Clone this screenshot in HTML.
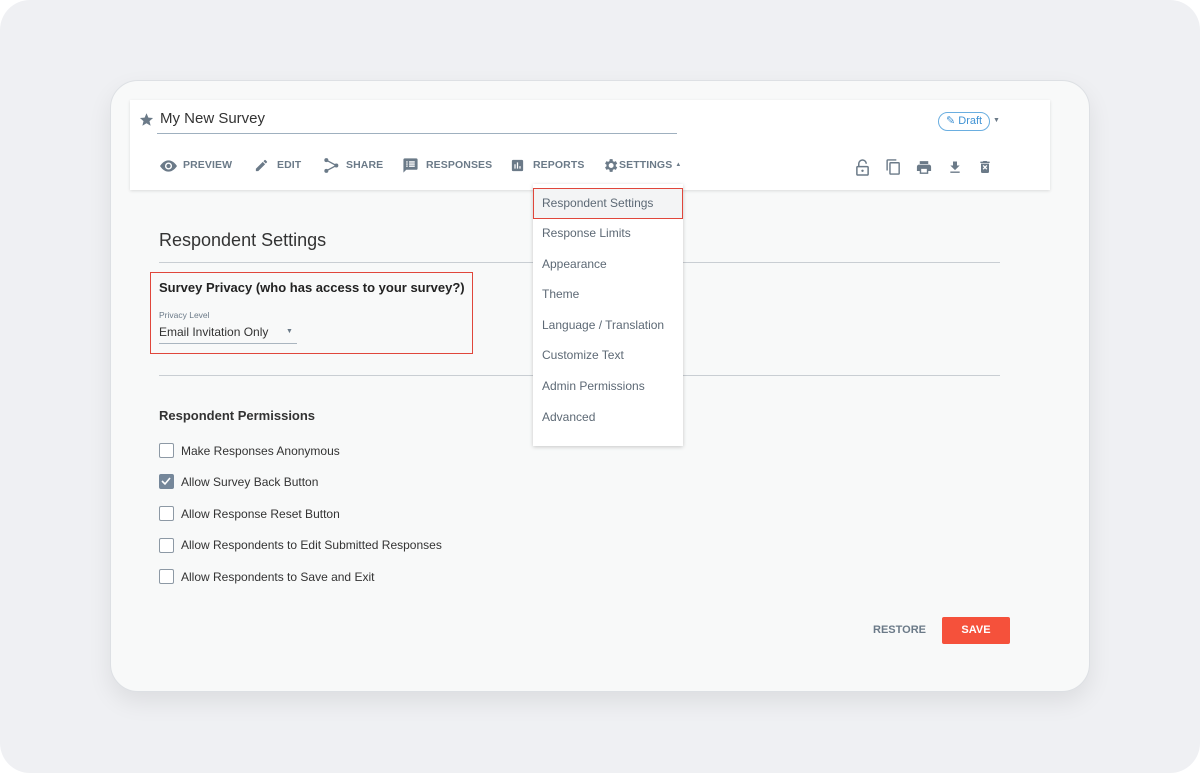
<!DOCTYPE html>
<html><head><meta charset="utf-8"><style>
*{box-sizing:border-box;margin:0;padding:0}
body{width:1200px;height:773px;background:#fff;font-family:"Liberation Sans",sans-serif;overflow:hidden;position:relative}
.frame{position:absolute;left:0;top:0;width:1200px;height:773px;background:#eff0f3;border-radius:30px}
.card{position:absolute;left:110px;top:80px;width:980px;height:612px;background:#f8f9f9;border:1px solid #dde0e4;border-radius:28px;box-shadow:0 10px 24px rgba(0,0,0,.08)}
.abs{position:absolute}
.hdr{position:absolute;left:130px;top:100px;width:920px;height:90px;background:#fff;box-shadow:0 1px 3px rgba(0,0,0,.12)}
.nl{position:absolute;top:159px;font-size:10.5px;font-weight:bold;color:#6b7a88;letter-spacing:.1px}
.ni{position:absolute;fill:#6b7a88}
.menu{position:absolute;left:533px;top:184px;width:150px;height:262px;background:#fff;box-shadow:0 1px 4px rgba(0,0,0,.2)}
.mi{position:absolute;left:9px;font-size:12px;color:#5d6975}
.cb{position:absolute;left:159px;width:15px;height:15px;border:1.5px solid #8d99a5;border-radius:2px;background:#fff}
.cl{position:absolute;left:181px;font-size:12px;color:#333}
.ic{position:absolute;top:158px;fill:#6b7a88}
</style></head><body>
<div class="frame"></div>
<div class="card"></div>
<div class="hdr"></div>
<svg class="abs" style="left:139px;top:112px" width="15" height="15" viewBox="0 0 24 24"><path fill="#6b7a88" d="M12 2l3 7 7.5.6-5.7 5 1.8 7.4L12 18l-6.6 4 1.8-7.4-5.7-5L9 9z"/></svg>
<div class="abs" style="left:160px;top:110px;font-size:15px;color:#333">My New Survey</div>
<div class="abs" style="left:157px;top:133px;width:520px;height:1px;background:#9fb0bf"></div>
<div class="abs" style="left:938px;top:112px;width:52px;height:19px;border:1.5px solid #6aaee0;border-radius:10px;font-size:11px;color:#3f92d4;padding-left:7px;line-height:16px">✎ Draft</div>
<div class="abs" style="left:993px;top:117px;font-size:7px;color:#6b7a88">▼</div>

<svg class="ni" style="left:160px;top:160px" width="17" height="12" viewBox="0 0 24 16"><path d="M12 0C6 0 2 5 0 8c2 3 6 8 12 8s10-5 12-8C22 5 18 0 12 0zm0 13a5 5 0 110-10 5 5 0 010 10zm0-8a3 3 0 100 6 3 3 0 000-6z"/></svg><div class="nl" style="left:183px">PREVIEW</div>
<svg class="ni" style="left:254px;top:158px" width="15" height="15" viewBox="0 0 24 24"><path d="M3 17.25V21h3.75L17.8 9.94l-3.75-3.75zM20.7 7.04a1 1 0 000-1.41l-2.34-2.34a1 1 0 00-1.41 0l-1.83 1.83 3.75 3.75z"/></svg><div class="nl" style="left:277px">EDIT</div>
<svg class="ni" style="left:323px;top:157px" width="16" height="17" viewBox="0 0 24 24"><circle cx="5" cy="4" r="3"/><circle cx="20" cy="12" r="3"/><circle cx="5" cy="20" r="3"/><path d="M5 4l15 8-15 8" stroke="#6b7a88" stroke-width="2" fill="none"/></svg><div class="nl" style="left:346px">SHARE</div>
<svg class="ni" style="left:402px;top:157px" width="17" height="17" viewBox="0 0 24 24"><path d="M20 2H4a2 2 0 00-2 2v18l4-4h14a2 2 0 002-2V4a2 2 0 00-2-2zM8 14H6v-2h2zm0-3H6V9h2zm0-3H6V6h2zm10 6h-8v-2h8zm0-3h-8V9h8zm0-3h-8V6h8z"/></svg><div class="nl" style="left:426px">RESPONSES</div>
<svg class="ni" style="left:510px;top:158px" width="15" height="15" viewBox="0 0 24 24"><path d="M19 3H5a2 2 0 00-2 2v14a2 2 0 002 2h14a2 2 0 002-2V5a2 2 0 00-2-2zM9 17H7v-7h2zm4 0h-2V7h2zm4 0h-2v-4h2z"/></svg><div class="nl" style="left:533px">REPORTS</div>
<svg class="ni" style="left:602px;top:157px" width="17" height="17" viewBox="0 0 24 24"><path d="M19.4 13a7.5 7.5 0 000-2l2.1-1.6-2-3.5-2.5 1a7 7 0 00-1.7-1L14.9 3h-4l-.4 2.9a7 7 0 00-1.7 1l-2.5-1-2 3.5L6.4 11a7.5 7.5 0 000 2l-2.1 1.6 2 3.5 2.5-1a7 7 0 001.7 1l.4 2.9h4l.4-2.9a7 7 0 001.7-1l2.5 1 2-3.5zM12.9 15.5a3.5 3.5 0 110-7 3.5 3.5 0 010 7z"/></svg><div class="nl" style="left:619px">SETTINGS <span style="font-size:6px;vertical-align:2px">▲</span></div>

<svg class="ic" style="left:855px;top:159px" width="15" height="17" viewBox="0 0 16 18"><path d="M4 8V5a4 4 0 018 0" stroke="#6b7a88" stroke-width="1.6" fill="none"/><rect x="2" y="8" width="12" height="9" rx="1" stroke="#6b7a88" stroke-width="1.6" fill="none"/><circle cx="8" cy="12.5" r="1.3"/></svg>
<svg class="ic" style="left:885px;top:158px" width="17" height="18" viewBox="0 0 24 24"><path d="M16 1H4a2 2 0 00-2 2v14h2V3h12zm3 4H8a2 2 0 00-2 2v14a2 2 0 002 2h11a2 2 0 002-2V7a2 2 0 00-2-2zm0 16H8V7h11z"/></svg>
<svg class="ic" style="left:915px;top:159px" width="18" height="17" viewBox="0 0 24 24"><path d="M19 8H5a3 3 0 00-3 3v6h4v4h12v-4h4v-6a3 3 0 00-3-3zm-3 11H8v-5h8zM18 3H6v4h12z"/></svg>
<svg class="ic" style="left:947px;top:159px" width="16" height="17" viewBox="0 0 24 24"><path d="M19 9h-4V3H9v6H5l7 7zM5 18v2h14v-2z"/></svg>
<svg class="ic" style="left:977px;top:158px" width="16" height="18" viewBox="0 0 24 24"><path d="M6 19a2 2 0 002 2h8a2 2 0 002-2V7H6zm2.5-8.6l1.4-1.4L12 11.1 14.1 9l1.4 1.4L13.4 12.5l2.1 2.1-1.4 1.4-2.1-2.1-2.1 2.1-1.4-1.4 2.1-2.1zM15.5 4l-1-1h-5l-1 1H5v2h14V4z"/></svg>

<div class="abs" style="left:159px;top:230px;font-size:18px;color:#333">Respondent Settings</div>
<div class="abs" style="left:159px;top:262px;width:841px;height:1px;background:#c9ced3"></div>
<div class="abs" style="left:150px;top:272px;width:323px;height:82px;border:1.5px solid #e0463b"></div>
<div class="abs" style="left:159px;top:280px;font-size:13px;font-weight:bold;color:#222">Survey Privacy (who has access to your survey?)</div>
<div class="abs" style="left:159px;top:310px;font-size:8.5px;color:#6b7a88">Privacy Level</div>
<div class="abs" style="left:159px;top:325px;font-size:12px;color:#333">Email Invitation Only</div>
<div class="abs" style="left:286px;top:328px;font-size:7px;color:#6b7a88">▼</div>
<div class="abs" style="left:159px;top:343px;width:138px;height:1px;background:#aab5bf"></div>
<div class="abs" style="left:159px;top:375px;width:841px;height:1px;background:#c9ced3"></div>

<div class="abs" style="left:159px;top:408px;font-size:13px;font-weight:bold;color:#333">Respondent Permissions</div>
<div class="cb" style="top:443px"></div><div class="cl" style="top:444px">Make Responses Anonymous</div>
<div class="cb" style="top:474px;background:#75879a;border-color:#75879a"><svg width="12" height="12" viewBox="0 0 12 12" style="position:absolute;left:0;top:0"><path d="M2 6l3 3 5-6" stroke="#fff" stroke-width="1.6" fill="none"/></svg></div><div class="cl" style="top:475px">Allow Survey Back Button</div>
<div class="cb" style="top:506px"></div><div class="cl" style="top:507px">Allow Response Reset Button</div>
<div class="cb" style="top:538px"></div><div class="cl" style="top:538px">Allow Respondents to Edit Submitted Responses</div>
<div class="cb" style="top:569px"></div><div class="cl" style="top:570px">Allow Respondents to Save and Exit</div>

<div class="abs" style="left:873px;top:624px;font-size:11px;font-weight:bold;color:#6b7a88">RESTORE</div>
<div class="abs" style="left:942px;top:617px;width:68px;height:27px;background:#f5513b;border-radius:2px;color:#fff;font-size:11px;font-weight:bold;text-align:center;line-height:27px">SAVE</div>

<div class="menu">
<div class="abs" style="left:0;top:4px;width:150px;height:31px;border:1.5px solid #e0463b;background:#f3f4f5"></div>
<div class="mi" style="top:12px">Respondent Settings</div>
<div class="mi" style="top:42px">Response Limits</div>
<div class="mi" style="top:73px">Appearance</div>
<div class="mi" style="top:103px">Theme</div>
<div class="mi" style="top:134px">Language / Translation</div>
<div class="mi" style="top:164px">Customize Text</div>
<div class="mi" style="top:195px">Admin Permissions</div>
<div class="mi" style="top:226px">Advanced</div>
</div>
</body></html>
